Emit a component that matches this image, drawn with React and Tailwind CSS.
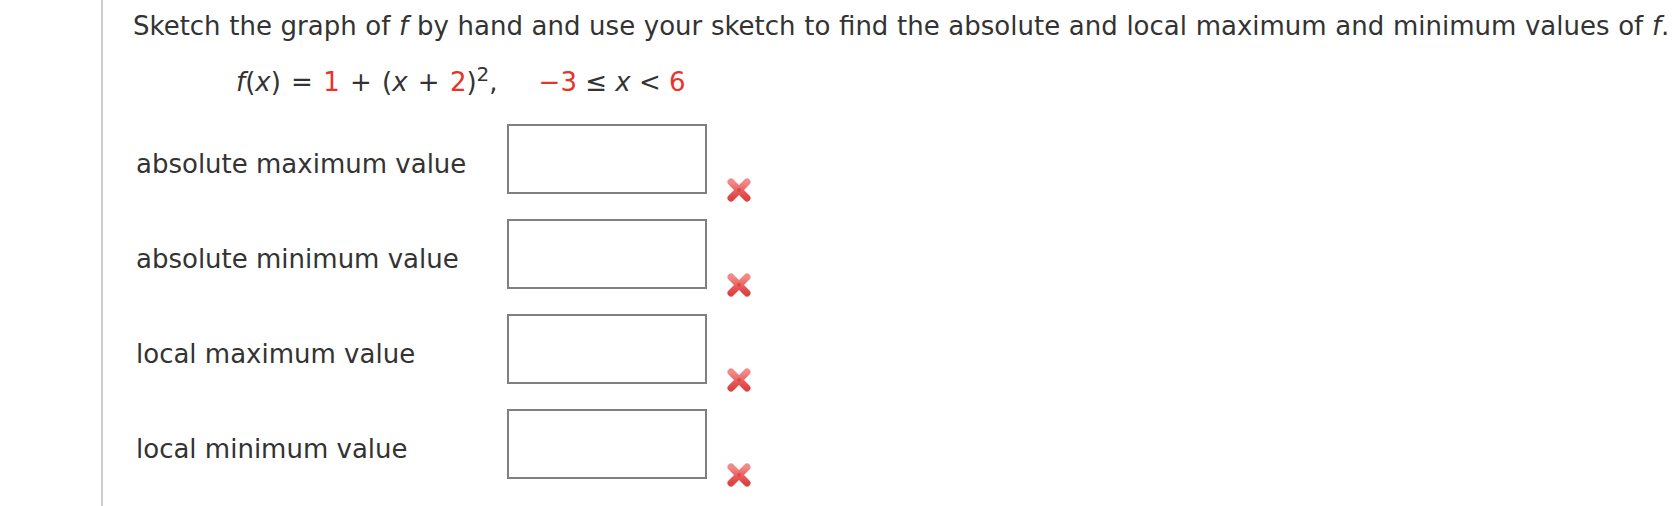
import React from 'react'

function WrongMark() {
    return (
        <svg width="28" height="28" viewBox="0 0 28 28" className="block">
            <defs>
                <linearGradient id="xg" x1="0" y1="0" x2="0" y2="1">
                    <stop offset="0" stopColor="#f38a8a" />
                    <stop offset="0.6" stopColor="#e85c5c" />
                    <stop offset="1" stopColor="#dc4444" />
                </linearGradient>
            </defs>
            <path d="M6 6 L22 22 M22 6 L6 22" stroke="url(#xg)" strokeWidth="7" strokeLinecap="round" fill="none" />
            <circle cx="14" cy="14" r="2" fill="#e24848" />
        </svg>
    )
}

const rows = [
    'absolute maximum value',
    'absolute minimum value',
    'local maximum value',
    'local minimum value',
];

export default function App() {
    return (
        <div className="w-[1678px] h-[506px] overflow-hidden bg-white font-['DejaVu_Sans','Verdana',sans-serif] text-[#333]">
            <div className="ml-[101px] h-full border-l-2 border-[#cccccc] pl-[30px] pt-[11px]">
                <p className="text-[26px] leading-[31px] whitespace-nowrap [word-spacing:0.4px]">
                    Sketch the graph of <i>f</i> by hand and use your sketch to find the absolute and local maximum and minimum values of <i>f</i>.
                </p>
                <p className="mt-[25px] ml-[103px] text-[26px] leading-[31px] whitespace-nowrap">
                    <span className="[word-spacing:2px]">
                        <i>f</i>(<i>x</i>) = <span className="text-[#e8332a]">1</span> + (<i>x</i> + <span className="text-[#e8332a]">2</span>)
                    </span>
                    <sup className="text-[20px]">2</sup>,
                    <span className="ml-[41px] text-[#e8332a]">−3</span> ≤ <i>x</i> &lt; <span className="text-[#e8332a]">6</span>
                </p>
                <div className="mt-[26px] flex flex-col">
                    {rows.map((label) => (
                        <div key={label} className="flex items-start h-[95px]">
                            <div className="w-[374px] pl-[3px] pt-[25px] text-[26px] leading-[31px] whitespace-nowrap">
                                {label}
                            </div>
                            <input
                                type="text"
                                className="w-[200px] h-[70px] border-2 border-[#808080] bg-white outline-none"
                            />
                            <div className="ml-[18px] mt-[52px]">
                                <WrongMark />
                            </div>
                        </div>
                    ))}
                </div>
            </div>
        </div>
    )
}
